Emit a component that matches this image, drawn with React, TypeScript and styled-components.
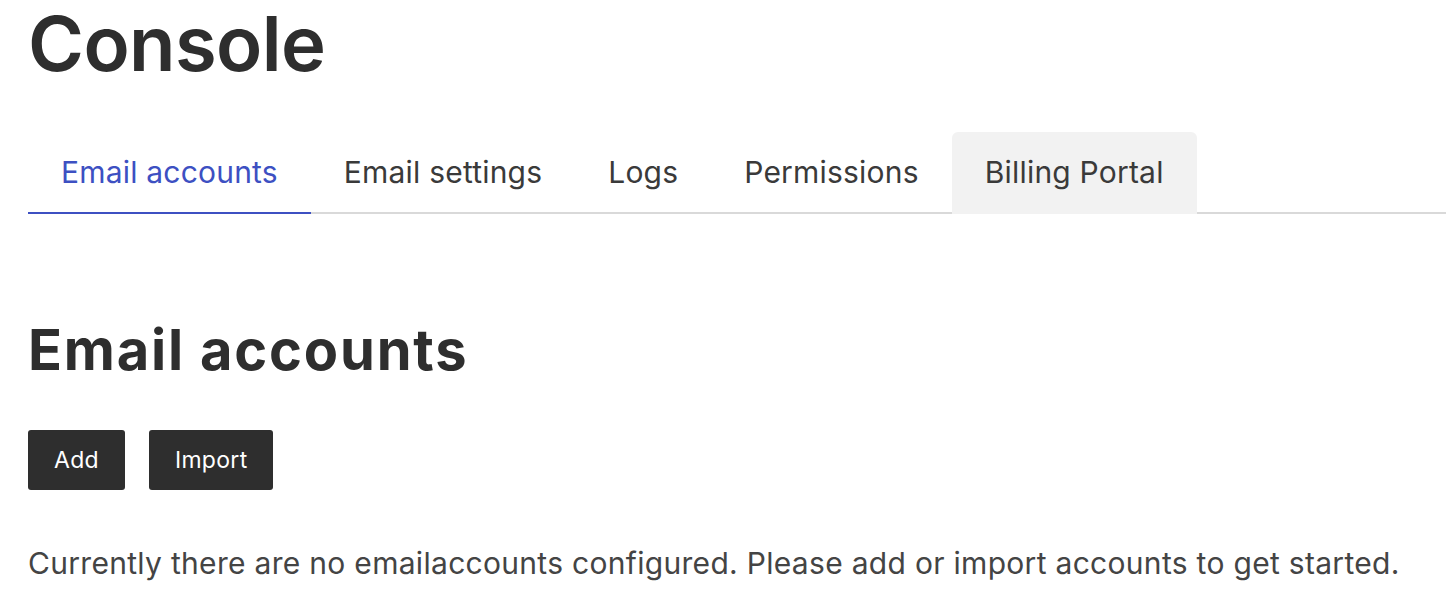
import styled, { createGlobalStyle } from "styled-components";

const GlobalStyle = createGlobalStyle`
  body {
    margin: 0;
    background: #ffffff;
    font-family: Inter, "Noto Sans", sans-serif;
    color: #2e2e2e;
  }
`;

const tabs = ["Email accounts", "Email settings", "Logs", "Permissions", "Billing Portal"];

export default function App() {
  return (
    <>
      <GlobalStyle />
      <Page>
        <Title>Console</Title>
        <TabBar>
          {tabs.map((tab, i) => (
            <Tab key={tab} $active={i === 0} $highlight={tab === "Billing Portal"}>
              {tab}
            </Tab>
          ))}
        </TabBar>
        <Section>
          <Heading>Email accounts</Heading>
          <Actions>
            <Button>Add</Button>
            <Button>Import</Button>
          </Actions>
          <Notice>
            Currently there are no emailaccounts configured. Please add or import accounts to get started.
          </Notice>
        </Section>
      </Page>
    </>
  );
}

const Page = styled.div`
  padding: 0 28px;
`;

const Title = styled.h1`
  margin: 0;
  padding-top: 1px;
  font-size: 76px;
  line-height: 85px;
  font-weight: 600;
  color: #2e2e2e;
  letter-spacing: -0.6px;
`;

const TabBar = styled.div`
  display: flex;
  margin: 46px -28px 0 0;
  border-bottom: 2px solid #d9d9d9;
`;

const Tab = styled.div<{ $active?: boolean; $highlight?: boolean }>`
  height: 80px;
  padding: 0 33px;
  display: flex;
  align-items: center;
  font-size: 30px;
  letter-spacing: 0.2px;
  margin-bottom: -2px;
  color: ${(p) => (p.$active ? "#3d50c2" : "#3a3a3a")};
  border-bottom: 2px solid ${(p) => (p.$active ? "#3d50c2" : "transparent")};
  background: ${(p) => (p.$highlight ? "#f2f2f2" : "transparent")};
  border-radius: ${(p) => (p.$highlight ? "6px 6px 0 0" : "0")};
`;

const Section = styled.div`
  padding-top: 106px;
`;

const Heading = styled.h2`
  margin: 0;
  font-size: 56px;
  line-height: 60px;
  font-weight: 700;
  letter-spacing: 1.8px;
  color: #2e2e2e;
`;

const Actions = styled.div`
  display: flex;
  gap: 24px;
  margin-top: 50px;
`;

const Button = styled.button`
  height: 60px;
  padding: 0 26px;
  border: none;
  border-radius: 3px;
  background: #2e2e2e;
  color: #ffffff;
  font-family: Inter, "Noto Sans", sans-serif;
  font-size: 23px;
  letter-spacing: 0.3px;
`;

const Notice = styled.p`
  margin: 55px 0 0;
  font-size: 30px;
  letter-spacing: 0.3px;
  color: #444444;
`;
